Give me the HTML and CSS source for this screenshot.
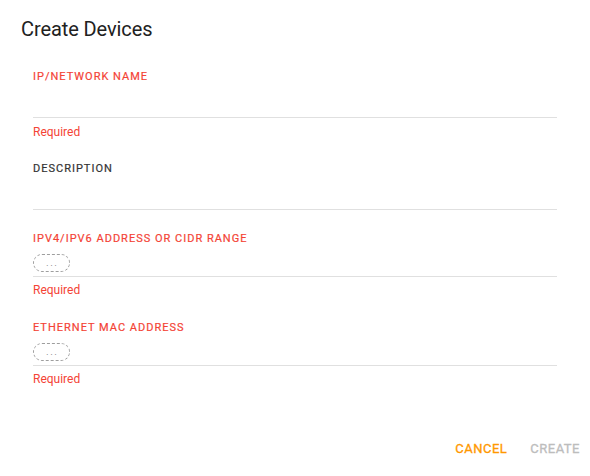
FILE: index.html
```html
<!DOCTYPE html>
<html>
<head>
<meta charset="utf-8">
<link rel="stylesheet" href="styles.css">
</head>
<body>
<div class="dialog">
  <h2 class="title">Create Devices</h2>
  <div class="content">
    <div class="field f1">
      <div class="label error">IP/NETWORK NAME</div>
      <div class="input tall"></div>
      <div class="helper">Required</div>
    </div>
    <div class="field f2">
      <div class="label">DESCRIPTION</div>
      <div class="input tall2"></div>
    </div>
    <div class="field f3">
      <div class="label error">IPV4/IPV6 ADDRESS OR CIDR RANGE</div>
      <div class="input chips"><span class="chip">. . .</span></div>
      <div class="helper tight">Required</div>
    </div>
    <div class="field f4">
      <div class="label error">ETHERNET MAC ADDRESS</div>
      <div class="input chips"><span class="chip">. . .</span></div>
      <div class="helper tight">Required</div>
    </div>
  </div>
  <div class="actions">
    <span class="btn primary">CANCEL</span>
    <span class="btn disabled">CREATE</span>
  </div>
</div>
</body>
</html>
```

FILE: styles.css
```css
html, body {
  margin: 0;
  padding: 0;
  background: #fff;
  font-family: Roboto, "Noto Sans", Arial, sans-serif;
}
.dialog {
  width: 590px;
  height: 476px;
}
.title {
  margin: 0;
  padding: 13px 0 0 21px;
  font-size: 20px;
  font-weight: 400;
  line-height: 32px;
  letter-spacing: -0.1px;
  color: #212121;
}
.content {
  padding: 0 33px;
}
.field {
  display: flex;
  flex-direction: column;
}
.f1 { margin-top: 23px; }
.f2 { margin-top: 20px; }
.f3 { margin-top: 20px; }
.f4 { margin-top: 21px; }
.tall { height: 32px; }
.tall2 { height: 32px; }
.label {
  padding-top: 1px;
  font-size: 11px;
  font-weight: 400;
  line-height: 16px;
  letter-spacing: 1px;
  color: #333;
  -webkit-text-stroke: 0.2px currentColor;
}
.label.error { color: #f44336; }
.input {
  border-bottom: 1px solid #e0e0e0;
}
.chips {
  padding: 7px 0 4px 0;
  display: flex;
}
.chip {
  box-sizing: border-box;
  width: 37px;
  height: 18px;
  border: 1px dashed #9e9e9e;
  border-radius: 9px;
  font-size: 8px;
  line-height: 18px;
  color: #616161;
  text-align: center;
  letter-spacing: 0;
}
.helper {
  margin-top: 6px;
  font-size: 12px;
  line-height: 16px;
  color: #f44336;
}
.helper.tight { margin-top: 5px; }
.actions {
  display: flex;
  justify-content: flex-end;
  gap: 23px;
  padding-right: 10px;
  margin-top: 44px;
}
.btn {
  font-size: 13px;
  font-weight: 400;
  line-height: 36px;
  letter-spacing: 0.5px;
  -webkit-text-stroke: 0.3px currentColor;
}
.primary { color: #ff9800; }
.disabled { color: #bdbdbd; }
```
